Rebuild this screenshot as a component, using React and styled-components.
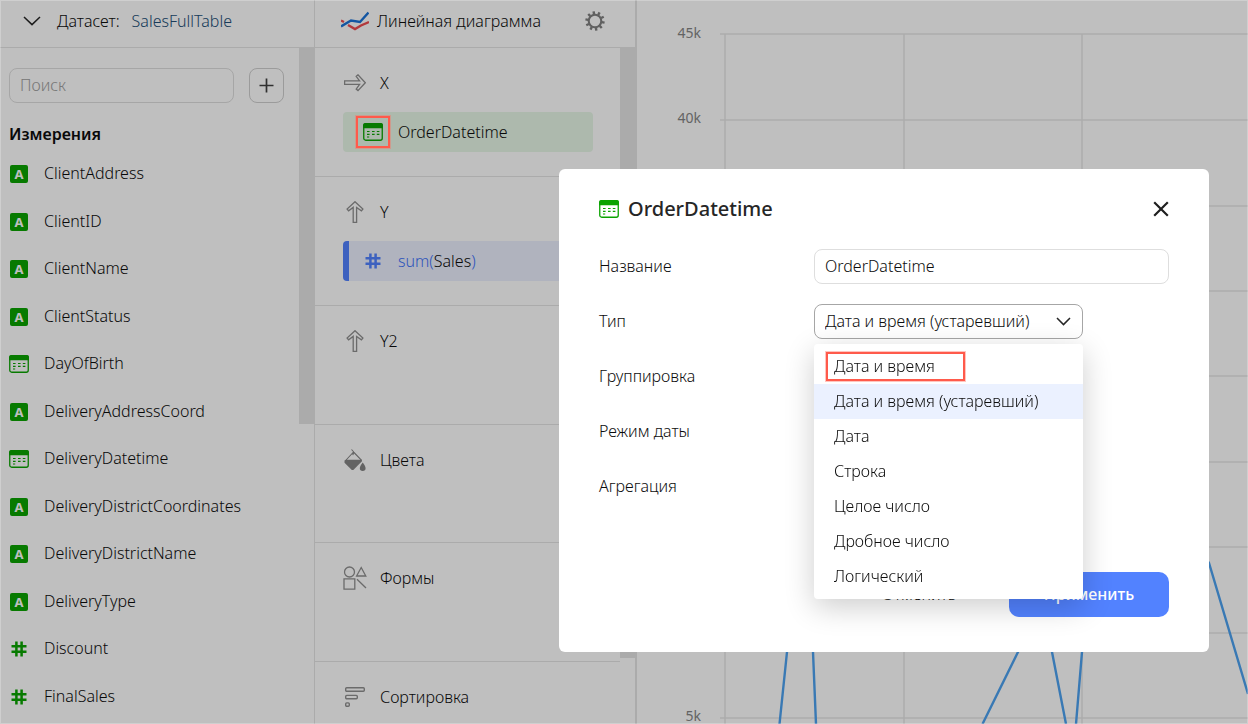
import React from "react";
import styled, { createGlobalStyle, css } from "styled-components";

const GlobalStyle = createGlobalStyle`
  *, *::before, *::after { box-sizing: border-box; }
  body {
    margin: 0;
    background: #fff;
    color: #0d0d0d;
    font-family: "Noto Sans", "Open Sans", sans-serif;
    font-size: 16px;
    font-weight: 300;
    line-height: 22px;
  }
  input, select, button { font: inherit; color: inherit; }
  svg { display: block; flex: none; }
`;

const LINE = "#e4e4e4";
const GREEN = "#0aa300";
const BLUE = "#5282ff";

const Page = styled.div`
  display: flex;
  height: 100vh;
  overflow: hidden;
`;

const Panel = styled.section`
  display: flex;
  flex-direction: column;
  flex: none;
  width: ${(p) => p.$width};
  border-right: ${(p) => p.$edge} solid ${LINE};
`;

const PanelHeader = styled.header`
  display: flex;
  align-items: center;
  flex: none;
  height: 48px;
  padding: 0 30px 5px ${(p) => p.$start};
  border-bottom: 1px solid ${LINE};
`;

const DatasetTitle = styled.h2`
  display: flex;
  gap: 12px;
  margin: 0 0 0 16px;
  font-size: 16px;
  font-weight: inherit;
`;

const DatasetLink = styled.a`
  color: #234f78;
  text-decoration: none;
`;

const ChartTitle = styled.h2`
  flex: 1;
  margin: 0 0 0 8px;
  font-size: 16px;
  font-weight: inherit;
  white-space: nowrap;
`;

const IconButton = styled.button`
  display: flex;
  align-items: center;
  justify-content: center;
  padding: 0;
  border: 0;
  background: none;
  cursor: pointer;
`;

const PanelBody = styled.div`
  display: flex;
  flex: 1;
  min-height: 0;
`;

const PanelContent = styled.div`
  flex: 1;
  min-width: 0;
  overflow: hidden;
`;

const ScrollThumb = styled.div`
  flex: none;
  width: ${(p) => p.$width};
  height: ${(p) => p.$height};
  background: ${LINE};
`;

const SearchRow = styled.form`
  display: flex;
  gap: 15px;
  padding: 20px 15px 0 9px;
`;

const TextInput = styled.input`
  flex: 1;
  min-width: 0;
  height: 35px;
  padding: 0 10px 2px;
  border: 1px solid #dedede;
  border-radius: 8px;
  background: transparent;
  outline: none;
  &::placeholder { color: #a0a0a0; opacity: 1; }
`;

const AddButton = styled(IconButton)`
  flex: none;
  width: 35px;
  height: 35px;
  border: 1px solid #cfcfcf;
  border-radius: 8px;
`;

const GroupTitle = styled.h3`
  margin: 20px 0 5px 9px;
  font-size: 16px;
  font-weight: 600;
`;

const FieldList = styled.ul`
  margin: 0;
  padding: 0;
  list-style: none;
`;

const FieldRow = styled.li`
  display: flex;
  align-items: center;
  gap: 15px;
  height: 47px;
  padding-left: 9px;
  &:nth-child(odd) { height: 48px; }
`;

const FieldName = styled.span`
  padding-bottom: 2px;
`;

const FormLabel = styled.label`
  padding-bottom: 2px;
`;

const IconBox = styled.span`
  position: relative;
  display: flex;
  justify-content: center;
  flex: none;
  width: ${(p) => p.$width || "20px"};
`;

const highlightFrame = css`
  border: 2px solid #ff5a4b;
  box-shadow: 0 0 0 1px rgba(255, 110, 95, 0.4);
`;

const MarkedIcon = styled(IconBox)`
  &::after {
    content: "";
    position: absolute;
    inset: -7px;
    z-index: 3;
    ${highlightFrame}
  }
`;

const LetterBadge = styled.span`
  width: 18px;
  height: 18px;
  border-radius: 2px;
  background: ${GREEN};
  color: #fff;
  font-size: 13px;
  font-weight: 700;
  line-height: 18px;
  text-align: center;
`;

const Slot = styled.section`
  min-height: 119px;
  padding: 24px 27px 24px 28px;
  border-bottom: 1px solid ${LINE};
  &:nth-child(even) { min-height: 118px; }
`;

const SlotTitle = styled.h3`
  display: flex;
  align-items: center;
  gap: 13px;
  height: 22px;
  margin: 0;
  font-size: 16px;
  font-weight: inherit;
`;

const SlotItem = styled.div`
  display: flex;
  align-items: center;
  gap: 15px;
  height: 40px;
  margin-top: 18px;
  padding-left: ${(p) => (p.$measure ? "14px" : "20px")};
  border-left: ${(p) => (p.$measure ? `6px solid ${BLUE}` : "0")};
  border-radius: 4px;
  background: ${(p) => (p.$measure ? "#ebeffe" : "#e7f7e7")};
`;

const Formula = styled.span`
  color: #3f72fa;
`;

const FormulaArg = styled.span`
  color: #0d0d0d;
`;

const ChartPanel = styled.main`
  flex: 1;
  min-width: 0;
`;

const AxisLabel = styled.text`
  fill: #858585;
  font-size: 14px;
  font-weight: 400;
  text-anchor: end;
`;

const Overlay = styled.div`
  position: fixed;
  inset: 0;
  z-index: 2;
  display: flex;
  align-items: flex-start;
  justify-content: flex-end;
  padding: 168px 38px 0 0;
  border: 1px solid rgba(255, 255, 255, 0.25);
  background: rgba(0, 0, 0, 0.25);
`;

const Dialog = styled.div`
  width: 650px;
  padding: 25px 40px 35px;
  border-radius: 6px;
  background: #fff;
`;

const DialogHeader = styled.div`
  display: flex;
  align-items: center;
  gap: 9px;
  height: 30px;
  margin-bottom: 25px;
`;

const DialogTitle = styled.h1`
  flex: 1;
  margin: 0;
  color: #262626;
  font-size: 20px;
  font-weight: 500;
  line-height: 30px;
`;

const Fields = styled.div`
  display: grid;
  grid-template-columns: 215px 1fr;
  grid-auto-rows: 35px;
  row-gap: 20px;
  align-items: center;
`;

const SelectWrap = styled.div`
  position: relative;
  display: flex;
  align-items: center;
  width: 269px;
`;

const Select = styled.select`
  appearance: none;
  width: 100%;
  height: 35px;
  padding: 0 40px 2px 10px;
  border: 1px solid ${(p) => (p.$open ? "#a6a6a6" : "#dedede")};
  border-radius: 8px;
  background: transparent;
  outline: none;
`;

const SelectArrow = styled.span`
  position: absolute;
  right: 12px;
  pointer-events: none;
`;

const Menu = styled.ul`
  position: absolute;
  top: 40px;
  left: 0;
  right: 0;
  z-index: 1;
  margin: 0;
  padding: 5px 0;
  list-style: none;
  border-radius: 4px;
  background: #fff;
  box-shadow: 0 8px 30px rgba(0, 0, 0, 0.2);
`;

const MenuItem = styled.li`
  height: 35px;
  padding-left: 20px;
  line-height: 35px;
  background: ${(p) => (p.$selected ? "#ebf1ff" : "transparent")};
`;

const MarkedOption = styled.span`
  position: relative;
  &::after {
    content: "";
    position: absolute;
    inset: -3px -30px -4px -8px;
    ${highlightFrame}
  }
`;

const DialogFooter = styled.div`
  display: flex;
  justify-content: flex-end;
  gap: 10px;
  margin-top: 68px;
`;

const ActionButton = styled.button`
  width: 160px;
  height: 45px;
  padding: 0 0 2px;
  border: 0;
  border-radius: 10px;
  background: ${(p) => (p.$primary ? BLUE : "transparent")};
  color: ${(p) => (p.$primary ? "#fff" : "inherit")};
  font-weight: ${(p) => (p.$primary ? 500 : "inherit")};
`;

const Chevron = ({ width = 18, height = 10 }) => (
  <svg
    width={width}
    height={height}
    viewBox={`0 0 ${width} ${height}`}
    fill="none"
    stroke="#262626"
    strokeWidth="1.5"
  >
    <path d={`M1 1L${width / 2} ${height - 1.4}L${width - 1} 1`} />
  </svg>
);

const CalendarIcon = () => (
  <svg width="20" height="18" viewBox="0 0 20 18">
    <rect x="0.75" y="0.75" width="18.5" height="16.5" rx="2" fill="none" stroke={GREEN} strokeWidth="1.3" />
    <path d="M0 5.2V2.2Q0 0 2.2 0H17.8Q20 0 20 2.2V5.2Z" fill={GREEN} />
    <path
      d="M9 8.5h2.6M13.8 8.5h2.6M4 8.5h2.6M4 11.3h2.6M9 11.3h2.6M13.8 11.3h2.6M4 14h2.2"
      stroke={GREEN}
      strokeWidth="1.2"
    />
  </svg>
);

const HashIcon = ({ color = GREEN }) => (
  <svg width="16" height="16" viewBox="0 0 16 16" stroke={color} strokeWidth="2.5">
    <path d="M5.4 0.5V15.5M10.6 0.5V15.5M0.5 5.2H15.5M0.5 10.8H15.5" />
  </svg>
);

const PlusIcon = () => (
  <svg width="15" height="15" viewBox="0 0 15 15" stroke="#404040" strokeWidth="1.7">
    <path d="M7.5 0.5V14.5M0.5 7.5H14.5" />
  </svg>
);

const LineChartIcon = () => (
  <svg width="28" height="20" viewBox="0 0 28 20" fill="none" strokeWidth="2.4">
    <path d="M0 9.5L3 11M7 14L14 18L20 14.5L28 11" stroke="#ee4c50" />
    <path d="M0 15.5L10 9.5L19 11L27.5 1.5" stroke="#1a73d9" />
  </svg>
);

const teeth = Array.from({ length: 10 }, (_, i) => i * 36);

const GearIcon = () => (
  <svg width="20" height="20" viewBox="0 0 20 20" fill="none" stroke="#808080">
    <circle cx="10" cy="10" r="6.3" strokeWidth="2.1" />
    {teeth.map((angle) => (
      <path key={angle} d="M10 3.2V0.3" strokeWidth="2.4" transform={`rotate(${angle - 8} 10 10)`} />
    ))}
  </svg>
);

const ARROW = "M0.6 6.9H15.6L12.2 2.3L14 0.8L21.3 8.7L14 16.6L12.2 15.1L15.6 10.3H0.6Z";

const RightArrowIcon = () => (
  <svg width="22" height="18" viewBox="0 0 22 18" fill="none" stroke="#8f8f8f" strokeWidth="1.3">
    <path d={ARROW} />
  </svg>
);

const UpArrowIcon = () => (
  <svg width="18" height="22" viewBox="0 0 18 22" fill="none" stroke="#8f8f8f" strokeWidth="1.3">
    <path d={ARROW} transform="translate(0.3 22) rotate(-90)" />
  </svg>
);

const BucketIcon = () => (
  <svg width="22" height="22" viewBox="0 0 22 22">
    <path d="M7.5 0.5L9.8 3M9.8 3L8.8 6.2M9.5 3L17.6 11.4M9.5 3L1.2 12" fill="none" stroke="#858585" strokeWidth="1.1" />
    <path d="M0.5 11.6L2 10.8H17.8L18 12.2L9.3 21L7.8 21L0.5 13.8Z" fill="#858585" />
    <path d="M18.7 13.5Q21.6 17.4 21.6 19.2A2.9 2.7 0 0 1 15.8 19.2Q15.8 17.4 18.7 13.5Z" fill="#858585" />
  </svg>
);

const ShapesIcon = () => (
  <svg width="24" height="24" viewBox="0 0 24 24" fill="none" stroke="#8f8f8f" strokeWidth="1.3">
    <circle cx="6.5" cy="6" r="5" />
    <path d="M18.2 1.5L22.8 10H13.6ZM1 12.8H11.8V23.2H1ZM14 13.2L23 22" />
  </svg>
);

const SortIcon = () => (
  <svg width="20" height="20" viewBox="0 0 20 20" fill="none" stroke="#8f8f8f" strokeWidth="1.4">
    <rect x="0.7" y="0.7" width="18.6" height="3.6" rx="1" />
    <rect x="0.7" y="8.4" width="11.6" height="3.4" rx="1" />
    <rect x="0.7" y="15.9" width="3.6" height="3.4" rx="1" />
  </svg>
);

const CloseIcon = () => (
  <svg width="16" height="16" viewBox="0 0 16 16" stroke="#1f1f1f" strokeWidth="2.2">
    <path d="M1.2 1.2L14.8 14.8M14.8 1.2L1.2 14.8" />
  </svg>
);

const fieldIcons = {
  text: <LetterBadge>A</LetterBadge>,
  date: <CalendarIcon />,
  number: <HashIcon />,
};

const fields = [
  ["ClientAddress", "text"],
  ["ClientID", "text"],
  ["ClientName", "text"],
  ["ClientStatus", "text"],
  ["DayOfBirth", "date"],
  ["DeliveryAddressCoord", "text"],
  ["DeliveryDatetime", "date"],
  ["DeliveryDistrictCoordinates", "text"],
  ["DeliveryDistrictName", "text"],
  ["DeliveryType", "text"],
  ["Discount", "number"],
  ["FinalSales", "number"],
];

const slots = [
  {
    title: "X",
    icon: <RightArrowIcon />,
    item: (
      <SlotItem>
        <MarkedIcon>
          <CalendarIcon />
        </MarkedIcon>
        <span>OrderDatetime</span>
      </SlotItem>
    ),
  },
  {
    title: "Y",
    icon: <UpArrowIcon />,
    item: (
      <SlotItem $measure>
        <IconBox>
          <HashIcon color={BLUE} />
        </IconBox>
        <Formula>
          sum(<FormulaArg>Sales</FormulaArg>)
        </Formula>
      </SlotItem>
    ),
  },
  { title: "Y2", icon: <UpArrowIcon /> },
  { title: "Цвета", icon: <BucketIcon /> },
  { title: "Формы", icon: <ShapesIcon /> },
  { title: "Сортировка", icon: <SortIcon /> },
];

const types = [
  "Дата и время",
  "Дата и время (устаревший)",
  "Дата",
  "Строка",
  "Целое число",
  "Дробное число",
  "Логический",
];

const currentType = types[1];

const gridRows = [34, 120, 206, 291, 376, 462, 547, 633, 718];
const gridColumns = [88, 267, 445];
const series = [
  "M142.5 724L150 652L163 500L176 652L179 724",
  "M345.5 724L381 652L405 600L415 652L429 724",
  "M439 724L445 652L470 400L572 563L611 694",
];

function Chart() {
  return (
    <svg width="100%" height="100%" viewBox="0 0 611 724" preserveAspectRatio="xMinYMin slice">
      <g stroke="#e6e6e6" strokeWidth="1.5">
        {gridRows.map((y) => (
          <path key={y} d={`M83 ${y}H2000`} />
        ))}
        {gridColumns.map((x) => (
          <path key={x} d={`M${x} 34V724`} />
        ))}
      </g>
      <g fill="none" stroke="#4da2f1" strokeWidth="2.4">
        {series.map((d) => (
          <path key={d} d={d} />
        ))}
      </g>
      <AxisLabel x="64" y="38">45k</AxisLabel>
      <AxisLabel x="64" y="123">40k</AxisLabel>
      <AxisLabel x="64" y="721">5k</AxisLabel>
    </svg>
  );
}

export default function App() {
  return (
    <>
      <GlobalStyle />
      <Page>
        <Panel $width="315px" $edge="1px">
          <PanelHeader $start="23px">
            <IconButton type="button" aria-label="Свернуть">
              <Chevron />
            </IconButton>
            <DatasetTitle>
              Датасет: <DatasetLink href="#dataset">SalesFullTable</DatasetLink>
            </DatasetTitle>
          </PanelHeader>
          <PanelBody>
            <PanelContent>
              <SearchRow>
                <TextInput type="search" placeholder="Поиск" aria-label="Поиск" />
                <AddButton type="button" aria-label="Добавить">
                  <PlusIcon />
                </AddButton>
              </SearchRow>
              <GroupTitle>Измерения</GroupTitle>
              <FieldList>
                {fields.map(([name, kind]) => (
                  <FieldRow key={name}>
                    <IconBox>{fieldIcons[kind]}</IconBox>
                    <FieldName>{name}</FieldName>
                  </FieldRow>
                ))}
              </FieldList>
            </PanelContent>
            <ScrollThumb $width="15px" $height="376px" />
          </PanelBody>
        </Panel>

        <Panel $width="322px" $edge="2px">
          <PanelHeader $start="26px">
            <LineChartIcon />
            <ChartTitle>Линейная диаграмма</ChartTitle>
            <IconButton type="button" aria-label="Настройки">
              <GearIcon />
            </IconButton>
          </PanelHeader>
          <PanelBody>
            <PanelContent>
              {slots.map((slot) => (
                <Slot key={slot.title}>
                  <SlotTitle>
                    <IconBox $width="24px">{slot.icon}</IconBox>
                    {slot.title}
                  </SlotTitle>
                  {slot.item}
                </Slot>
              ))}
            </PanelContent>
            <ScrollThumb $width="15px" $height="610px" />
          </PanelBody>
        </Panel>

        <ChartPanel>
          <Chart />
        </ChartPanel>
      </Page>

      <Overlay>
        <Dialog role="dialog" aria-labelledby="dialog-title">
          <DialogHeader>
            <CalendarIcon />
            <DialogTitle id="dialog-title">OrderDatetime</DialogTitle>
            <IconButton type="button" aria-label="Закрыть">
              <CloseIcon />
            </IconButton>
          </DialogHeader>
          <Fields>
            <FormLabel htmlFor="name">Название</FormLabel>
            <TextInput id="name" defaultValue="OrderDatetime" />
            <FormLabel htmlFor="type">Тип</FormLabel>
            <SelectWrap>
              <Select id="type" $open defaultValue={currentType}>
                {types.map((type) => (
                  <option key={type}>{type}</option>
                ))}
              </Select>
              <SelectArrow>
                <Chevron width={15} height={9} />
              </SelectArrow>
              <Menu role="listbox" aria-label="Тип">
                {types.map((type, i) => (
                  <MenuItem key={type} role="option" aria-selected={type === currentType} $selected={type === currentType}>
                    {i === 0 ? <MarkedOption>{type}</MarkedOption> : type}
                  </MenuItem>
                ))}
              </Menu>
            </SelectWrap>
            <FormLabel htmlFor="grouping">Группировка</FormLabel>
            <SelectWrap>
              <Select id="grouping" />
            </SelectWrap>
            <FormLabel htmlFor="date-mode">Режим даты</FormLabel>
            <SelectWrap>
              <Select id="date-mode" />
            </SelectWrap>
            <FormLabel htmlFor="aggregation">Агрегация</FormLabel>
            <SelectWrap>
              <Select id="aggregation" />
            </SelectWrap>
          </Fields>
          <DialogFooter>
            <ActionButton type="button">Отменить</ActionButton>
            <ActionButton type="button" $primary>
              Применить
            </ActionButton>
          </DialogFooter>
        </Dialog>
      </Overlay>
    </>
  );
}
